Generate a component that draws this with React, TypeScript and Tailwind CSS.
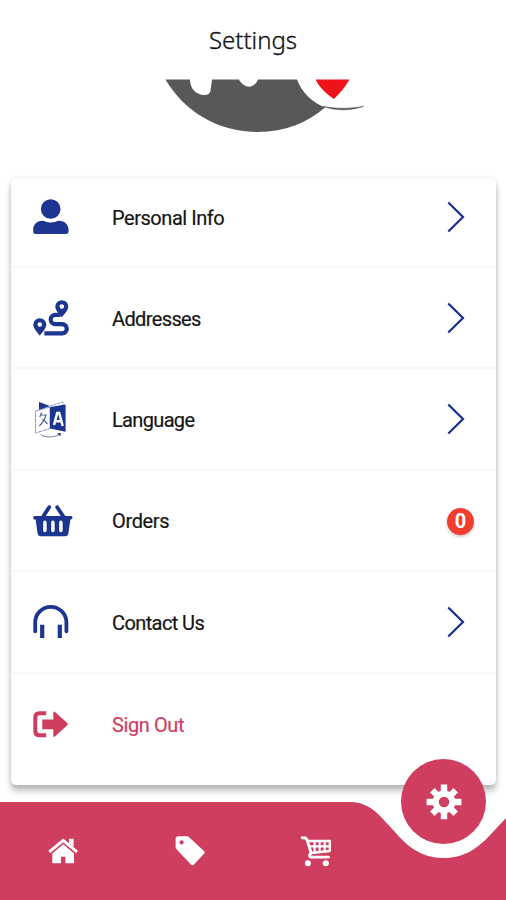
import React from 'react';
import clsx from 'clsx';

interface MenuItem {
    label: string;
    icon: React.ReactNode;
    tracking: string;
    badge?: number;
    danger?: boolean;
}

const UserIcon = () => (
    <svg viewBox="0 0 40 40" className="w-10 h-10" fill="#1c3590">
        <circle cx="19.7" cy="11" r="9.8" />
        <path d="M11.5 22.8C13.5 22.8 15.5 24.6 19.7 24.6S26 22.8 28 22.8C34 22.8 37.5 27 37.5 31.5V33.5Q37.5 36 34.8 36H4.8Q2.2 36 2.2 33.5V31.5C2.2 27 5.5 22.8 11.5 22.8Z" />
    </svg>
);

const RouteIcon = () => (
    <svg viewBox="0 0 40 40" className="w-10 h-10" fill="#1c3590">
        <path fillRule="evenodd" d="M8.8 20.2A6.5 6.5 0 0 1 15.3 26.6C15.3 30.3 11.4 34.5 8.8 37.7C6.2 34.5 2.3 30.3 2.3 26.6A6.5 6.5 0 0 1 8.8 20.2ZM8.8 24.2A2.3 2.3 0 1 0 8.8 28.8A2.3 2.3 0 1 0 8.8 24.2Z" />
        <path fillRule="evenodd" d="M30.8 2.2A6.5 6.5 0 0 1 37.3 8.6C37.3 12.3 33.4 16.3 30.8 19.2C28.2 16.3 24.3 12.3 24.3 8.6A6.5 6.5 0 0 1 30.8 2.2ZM30.8 6.2A2.3 2.3 0 1 0 30.8 10.8A2.3 2.3 0 1 0 30.8 6.2Z" />
        <path d="M29.5 16.9H24.3A4.6 4.6 0 0 0 24.3 26.1H31.2A4.6 4.6 0 0 1 31.2 35.3H13.4" fill="none" stroke="#1c3590" strokeWidth="4.2" />
    </svg>
);

const LanguageIcon = () => (
    <svg viewBox="0 0 40 40" className="w-10 h-10" fill="none" stroke="#6f7fae" strokeWidth="0.8">
        <path d="M8 2L19 6L8 10Z" fill="#1c3590" stroke="none" />
        <path d="M19 6L32 2V6" strokeDasharray="3 0.8" />
        <path d="M4.5 11L19 7V28.5L4.5 33Z" fill="#fff" strokeDasharray="5 0.6" />
        <path d="M19 7L34.6 4.5V31.8L19 28.5Z" fill="#1c3590" stroke="none" />
        <path d="M23 25L26.2 13H28.2L31.7 26M24.5 21.2H30.3" stroke="#fff" strokeWidth="2.5" />
        <path d="M10.5 12.5L8.8 17M9.8 15H15C13.5 20 11 23.5 8.3 26M11.5 18.8L16.5 24" stroke="#53659d" strokeWidth="1.2" />
        <path d="M9.5 34.5C13 37.3 22 38 28 34.8M29.3 33.2V36M26.3 34H29.3" strokeWidth="1" />
        <path d="M26.5 33.3L29.5 33L28.8 35.7Z" fill="#1c3590" stroke="none" />
    </svg>
);

const BasketIcon = () => (
    <svg viewBox="0 0 42 40" className="w-[42px] h-10">
        <path d="M18.2 6.2L11.5 16.5M26.2 6.2L33 16.5" fill="none" stroke="#1c3590" strokeWidth="3.8" strokeLinecap="round" />
        <path d="M3.8 15H40Q41.5 15 41.5 16.6T40 18.6H39.4L37.4 32.2Q36.9 35.2 34.3 35.2H9.7Q7.1 35.2 6.6 32.2L4.6 18.6H3.8Q2.2 18.6 2.2 16.7T3.8 15Z" fill="#1c3590" />
        <path d="M13.9 21.3V29.6M21.9 21.3V29.6M29.9 21.3V29.6" stroke="#fff" strokeWidth="3.5" strokeLinecap="round" />
    </svg>
);

const HeadphonesIcon = () => (
    <svg viewBox="0 0 40 40" className="w-10 h-10" fill="none" stroke="#1c3590" strokeWidth="3.8">
        <path d="M4.2 29.3V20.4A15.6 15.6 0 0 1 35.4 20.4V29.3" strokeLinecap="round" />
        <path d="M11.2 22.7V36M28.8 22.7V36" strokeWidth="4.2" />
    </svg>
);

const SignOutIcon = () => (
    <svg viewBox="0 0 40 40" className="w-10 h-10" fill="#cf3e5e">
        <path d="M15.2 8.3H8.5Q4.3 8.3 4.3 12.5V26Q4.3 30.3 8.5 30.3H15.2" fill="none" stroke="#cf3e5e" strokeWidth="4" />
        <path d="M11.3 14.6H22.3V7.7Q22.5 5.9 24 7L36.3 18.1Q37.3 19.2 36.3 20.3L24 31.5Q22.5 32.5 22.3 30.9V24.2H11.3Z" />
    </svg>
);

const HomeIcon = () => (
    <svg viewBox="0 0 32 32" className="w-8 h-8" fill="#fff">
        <path d="M22 3.7H26.6V12L22 8Z" />
        <path d="M2.2 16.9L16.2 5.4L30 16.9" fill="none" stroke="#fff" strokeWidth="3.1" />
        <path d="M16.2 9.3L27 18.4V28.2H18.4V21.8H14V28.2H5.3V18.4Z" />
    </svg>
);

const TagIcon = () => (
    <svg viewBox="0 0 32 32" className="w-8 h-8" fill="#fff">
        <path fillRule="evenodd" d="M4.3 1.3H12.8Q14.3 1.3 15.4 2.4L30.2 16.2Q31.4 17.4 30.2 18.6L19.7 29.7Q18.4 30.8 17.2 29.7L2.8 14.4Q1.6 13.2 1.6 11.7V4Q1.6 1.3 4.3 1.3ZM7.6 5.3A2.1 2.1 0 1 0 7.6 9.5A2.1 2.1 0 1 0 7.6 5.3Z" />
    </svg>
);

const CartIcon = () => (
    <svg viewBox="0 0 32 32" className="w-8 h-8" fill="none" stroke="#fff">
        <path d="M2.2 2.8L5.6 3L7 4.6L11.2 18.2C9.3 19.3 8.6 22 11.5 22.1H28.4" strokeWidth="2.9" strokeLinecap="round" strokeLinejoin="round" />
        <path d="M7.5 6H29.8V16L11 18" strokeWidth="2.3" strokeLinejoin="round" />
        <path d="M9 11.4H29M14.6 6V17M19.6 6V17M24.7 6V16" strokeWidth="2.1" />
        <circle cx="7.9" cy="28.2" r="3" fill="#fff" stroke="none" />
        <circle cx="25.8" cy="28.2" r="3" fill="#fff" stroke="none" />
    </svg>
);

const GearIcon = () => (
    <svg viewBox="-18 -18 36 36" className="w-9 h-9">
        <path d="M0 -17.4V17.2M-17.4 0H17.4M-11.7 -11.7L11.7 11.7M-11.7 11.7L11.7 -11.7" stroke="#fff" strokeWidth="6.4" />
        <circle r="8.3" fill="#cf3e5e" stroke="#fff" strokeWidth="6.2" />
    </svg>
);

const Chevron = () => (
    <svg viewBox="0 0 18 32" className="w-[18px] h-8" fill="none" stroke="#1b2d8c" strokeWidth="2.2">
        <path d="M1.3 1.5L16 16L1.3 30.5" />
    </svg>
);

const items: MenuItem[] = [
    { label: 'Personal Info', icon: <UserIcon />, tracking: 'tracking-[-0.46px]' },
    { label: 'Addresses', icon: <RouteIcon />, tracking: 'tracking-[-0.62px]' },
    { label: 'Language', icon: <LanguageIcon />, tracking: 'tracking-[-0.66px]' },
    { label: 'Orders', icon: <BasketIcon />, tracking: 'tracking-[-0.35px]', badge: 0 },
    { label: 'Contact Us', icon: <HeadphonesIcon />, tracking: 'tracking-[-0.6px]' },
    { label: 'Sign Out', icon: <SignOutIcon />, tracking: 'tracking-[-0.4px]', danger: true },
];

const MenuRow: React.FC<{ item: MenuItem; first: boolean; last: boolean }> = ({ item, first, last }) => (
    <div
        className={clsx(
            'flex items-center pl-5 pr-[31px]',
            first ? 'h-[90px] pb-[10px]' : 'h-[101.4px]',
            !last && 'border-b-2 border-[#f8f8f8]'
        )}
    >
        <div className="w-[81px] shrink-0 pt-px">{item.icon}</div>
        <span
            className={clsx(
                'flex-1 text-[20px] leading-6 pt-0.5 whitespace-nowrap [-webkit-text-stroke:0.2px_currentColor]',
                item.tracking,
                item.danger ? 'text-[#cf3e5e]' : 'text-[#151515]'
            )}
        >
            {item.label}
        </span>
        {item.badge !== undefined && (
            <span className="flex items-center justify-center w-[27px] h-[27px] mt-0.5 -mr-[9px] rounded-full bg-[#f23c30] text-white text-[20px] font-bold leading-none shadow-[0_2px_3px_rgba(0,0,0,0.2)]">
                {item.badge}
            </span>
        )}
        {item.badge === undefined && !item.danger && <Chevron />}
    </div>
);

const App: React.FC = () => {
    return (
        <div className="w-[506px] h-[900px] flex flex-col bg-white overflow-hidden font-['Roboto','Open_Sans',sans-serif]">
            <header className="h-[79px] shrink-0 flex items-center justify-center">
                <h1 className="font-['Noto_Sans','Open_Sans',sans-serif] font-light text-[24px] leading-8 text-[#111] [-webkit-text-stroke:0.3px_currentColor]">Settings</h1>
            </header>

            {/* Bottom part of the logo, cut off by the header */}
            <svg viewBox="160 79 210 56" className="w-[210px] h-14 shrink-0 ml-40">
                <path d="M165.5 79.5C184 111 217 132 258 132C285 132 307 123 325 107.5C312 102 302 93 297 79.5H258C254 89 244 89 239 79.5H212L210.5 91Q209.5 95.5 203 95C195 94 190 88 190 79.5Z" fill="#58585a" />
                <path d="M323 106.3C336 111 350 111 363.5 106.3C350 109 336 109 323 106.3Z" fill="#58585a" stroke="#58585a" strokeWidth="0.6" />
                <path d="M315.5 79.5H349.5C345 87.5 340 93 334 99C326 94 320 88 315.5 79.5Z" fill="#ee1219" />
            </svg>

            <main className="mt-[43px] mx-[11px] w-[485px] h-[607px] shrink-0 bg-white rounded-[5px] shadow-[0_6px_6px_rgba(0,0,0,0.26),0_0_4px_rgba(0,0,0,0.1)]">
                {items.map((item, i) => (
                    <MenuRow key={item.label} item={item} first={i === 0} last={i === items.length - 1} />
                ))}
            </main>

            <nav className="relative mt-[17px] h-[98px] shrink-0">
                <svg viewBox="0 0 506 98" className="absolute inset-0 w-full h-full">
                    <path d="M0 0H350C363 0 373 6 382 16L394 29C407 44 421 56 443.5 56C465 56 478 46 492 31L506 16V98H0Z" fill="#cf3e5e" />
                </svg>
                <div className="relative grid grid-cols-4 h-full items-center justify-items-center">
                    <HomeIcon />
                    <TagIcon />
                    <CartIcon />
                    <div className="w-[85px] h-[85px] -mt-[99px] ml-0.5 rounded-full bg-[#cf3e5e] flex items-center justify-center">
                        <GearIcon />
                    </div>
                </div>
            </nav>
        </div>
    );
};

export default App;
